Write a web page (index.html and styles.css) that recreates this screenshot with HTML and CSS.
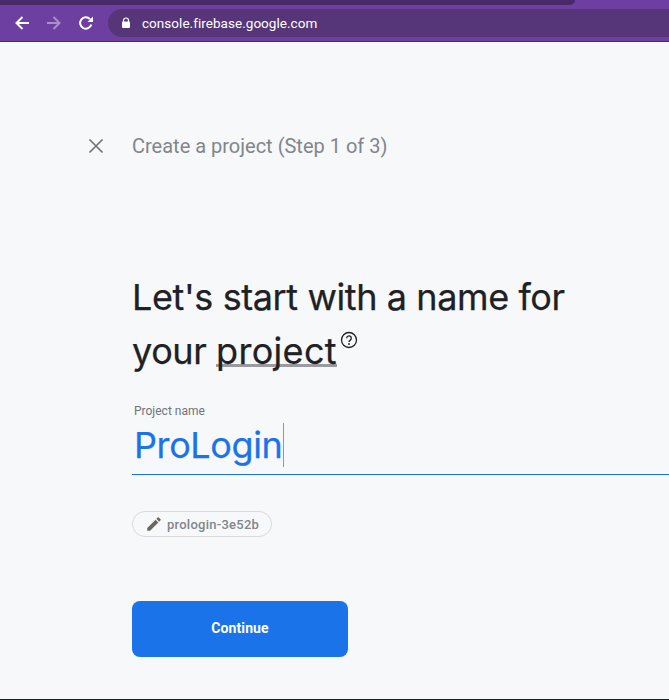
FILE: index.html
```html
<!DOCTYPE html>
<html lang="en">
<head>
<meta charset="utf-8">
<title>Create a project</title>
<link rel="stylesheet" href="styles.css">
</head>
<body>
<div class="chrome">
  <div class="tabstrip"><div class="tabfill"></div></div>
  <div class="toolbar">
    <svg class="nav nav-back" width="16" height="16" viewBox="0 0 16 16"><path d="M15 8H2.500M8.500 2L2.500 8l6 6" fill="none" stroke="#fff" stroke-width="2"/></svg>
    <svg class="nav nav-fwd" width="16" height="16" viewBox="0 0 16 16"><path d="M1 8h12.500M7.500 2l6 6-6 6" fill="none" stroke="#a88fc6" stroke-width="2"/></svg>
    <svg class="nav nav-reload" width="16" height="16" viewBox="0 0 16 16"><path d="M13.300 9.500A5.700 5.700 0 1 1 12 4.100" fill="none" stroke="#fff" stroke-width="2"/><path d="M9.500 7H15V1.500z" fill="#fff"/></svg>
    <div class="omnibox">
      <svg width="10" height="12" viewBox="0 0 10 12"><path d="M2.500 5V3.500a2.500 2.500 0 0 1 5 0V5" fill="none" stroke="#fff" stroke-width="1.200"/><rect x="1" y="4.500" width="8" height="6.500" rx="1" fill="#fff"/></svg>
      <span class="url">console.firebase.google.com</span>
    </div>
  </div>
</div>
<main class="page">
  <header class="stephead">
    <svg class="close" width="16" height="16" viewBox="0 0 16 16"><path d="M1.500 1.500l13 13M14.500 1.500l-13 13" fill="none" stroke="#6f7479" stroke-width="1.700"/></svg>
    <span class="steptitle">Create a project (Step 1 of 3)</span>
  </header>
  <section class="content">
    <h1 class="headline">Let's start with a name for<br>your <span class="term">project</span><svg class="help" width="18" height="18" viewBox="0 0 18 18"><circle cx="9" cy="9" r="7.500" fill="none" stroke="#202124" stroke-width="1.300"/><path d="M6.700 7.200a2.300 2.300 0 1 1 3.600 1.900c-.9.600-1.300 1-1.300 2" fill="none" stroke="#202124" stroke-width="1.300"/><circle cx="9" cy="13" r=".9" fill="#202124"/></svg></h1>
    <label class="field">
      <span class="fieldlabel">Project name</span>
      <span class="fieldvalue"><span class="valuetext">ProLogin</span><span class="caret"></span></span>
    </label>
    <div class="chip">
      <svg width="18" height="18" viewBox="0 0 24 24"><path d="M3 17.250V21h3.750L17.810 9.940l-3.750-3.750L3 17.250zM20.710 7.040a1 1 0 0 0 0-1.410l-2.340-2.340a1 1 0 0 0-1.410 0l-1.830 1.830 3.750 3.750 1.830-1.830z" fill="#6b6560"/></svg>
      <span class="chiptext">prologin-3e52b</span>
    </div>
    <button class="continue" type="button">Continue</button>
  </section>
</main>
</body>
</html>
```
FILE: styles.css
```css
* { box-sizing: border-box; }
html, body { margin: 0; padding: 0; height: 700px; overflow: hidden; }
body {
  background: #f7f8fa;
  font-family: Roboto, "Liberation Sans", sans-serif;
  display: flex;
  flex-direction: column;
  border-bottom: 1px solid #1c2024;
}
.chrome { height: 42px; flex: none; background: #6c3fa0; border-bottom: 1px solid #4a2b6e; }
.tabstrip { height: 5px; }
.tabfill { width: 575px; height: 5px; background: #472a67; border-bottom-right-radius: 5px; }
.toolbar { display: flex; align-items: center; height: 28px; margin-top: 4px; }
.nav { flex: none; }
.nav-back { margin-left: 14px; }
.nav-fwd { margin-left: 16px; }
.nav-reload { margin-left: 16px; }
.omnibox {
  flex: 1;
  height: 28px;
  margin-left: 14px;
  padding-left: 13px;
  display: flex;
  align-items: center;
  gap: 11px;
  background: #563678;
  border-radius: 14px 0 0 14px;
}
.url { color: #fff; font: 13.500px Roboto, sans-serif; letter-spacing: .04px; }
.page { flex: 1; }
.stephead { display: flex; align-items: center; height: 32px; margin-top: 88px; padding-left: 88px; }
.close { flex: none; }
.steptitle { margin-left: 28px; font-size: 20px; color: #80868b; }
.content { padding-left: 132px; margin-top: 108px; }
.headline {
  margin: 0;
  font: 400 36px/54px Inter, sans-serif;
  letter-spacing: -.4px;
  -webkit-text-stroke: .25px #202124;
  color: #202124;
  white-space: nowrap;
}
.term { border-bottom: 3px solid #9a9a9f; line-height: 1; display: inline-block; height: 34px; letter-spacing: .3px; }
.help { vertical-align: 15px; margin-left: 3px; }
.field { display: block; margin-top: 26px; border-bottom: 1px solid #1a73e8; height: 71px; padding-left: 2px; }
.fieldlabel { display: block; font-size: 12px; line-height: 14px; color: #6f7479; }
.fieldvalue { display: flex; align-items: flex-start; margin-top: 5px; }
.valuetext { font: 400 36px/44px Inter, sans-serif; letter-spacing: -.4px; -webkit-text-stroke: .25px #1a73e8; color: #1a73e8; }
.caret { width: 1px; height: 44px; background: #6f9fe0; margin-left: 1px; }
.chip {
  display: inline-flex;
  align-items: center;
  gap: 4px;
  width: 140px;
  height: 26px;
  margin-top: 36px;
  padding-left: 12px;
  border: 1px solid #d8dadc;
  border-radius: 13px;
}
.chiptext { font-size: 13px; font-weight: 500; color: #80868b; letter-spacing: .25px; }
.continue {
  display: block;
  width: 216px;
  height: 56px;
  margin-top: 64px;
  padding: 0 0 2px;
  border: 0;
  border-radius: 8px;
  background: #1a73e8;
  color: #fff;
  font: 700 14px Roboto, sans-serif;
  letter-spacing: .1px;
}
```
